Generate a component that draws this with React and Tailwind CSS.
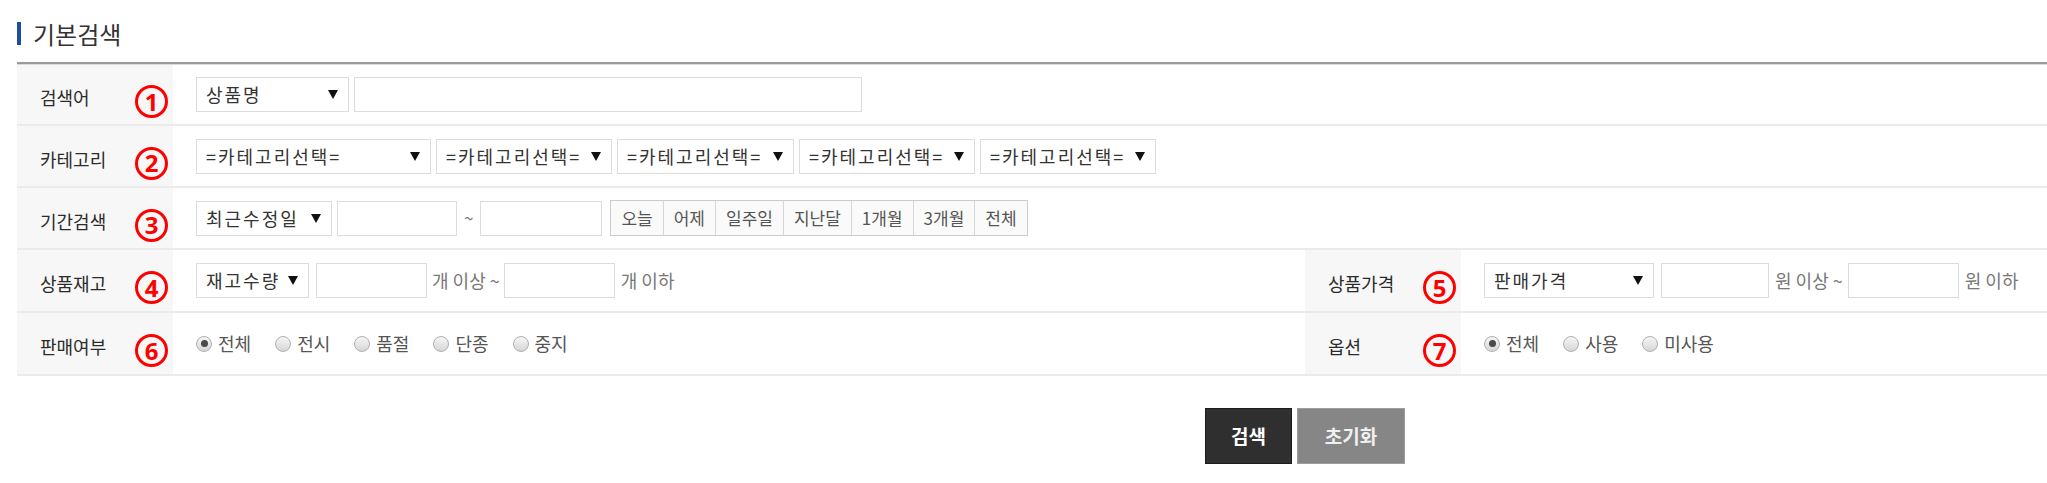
import React from "react";

function Num({ n }) {
  return (
    <span className="mt-[14px] flex h-[33px] w-[33px] shrink-0 items-center justify-center rounded-full border-[3px] border-[#ff0000] font-['Noto_Sans',sans-serif] text-[24px] font-bold leading-none text-[#ff0000]">
      {n}
    </span>
  );
}

function Label({ text, n }) {
  return (
    <div className="flex h-full items-center bg-[#f7f7f7] pl-[23px]">
      <span className="mt-[6px] w-[95px] shrink-0 text-[18px] text-[#2b2b2b]">{text}</span>
      <Num n={n} />
    </div>
  );
}

function Arrow() {
  return (
    <svg width="10" height="9" viewBox="0 0 10 9" className="shrink-0">
      <path d="M0 0 L10 0 L5 9 Z" fill="#111" />
    </svg>
  );
}

function Select({ text, w }) {
  return (
    <div className={`flex h-[35px] shrink-0 items-center justify-between border border-[#dcdcdc] bg-white pl-[9px] pr-[10px] ${w}`}>
      <span className="whitespace-nowrap text-[18px] tracking-[2px] text-[#333]">{text}</span>
      <Arrow />
    </div>
  );
}

function Input({ w }) {
  return <div className={`h-[35px] shrink-0 border border-[#dcdcdc] bg-white ${w}`} />;
}

function Radio({ checked, label }) {
  return (
    <div className="flex items-center gap-[6px]">
      <span className="flex h-[16px] w-[16px] items-center justify-center rounded-full border border-[#b0b0b0] bg-[linear-gradient(#f6f6f6,#d6d6d6)]">
        {checked && <span className="h-[7px] w-[7px] rounded-full bg-[#4a4a4a]" />}
      </span>
      <span className="text-[18px] text-[#555]">{label}</span>
    </div>
  );
}

const periods = ["오늘", "어제", "일주일", "지난달", "1개월", "3개월", "전체"];

export default function App() {
  return (
    <div className="min-h-screen bg-white pl-[17px] font-['Noto_Sans_CJK_KR','Noto_Sans',sans-serif]">
      {/* title */}
      <div className="flex items-center gap-[12px] pt-[22px]">
        <span className="h-[23px] w-[4px] bg-[#1b4f9c]" />
        <h2 className="text-[24px] leading-[23px] text-[#333]">기본검색</h2>
      </div>

      <div className="mt-[17px] h-[2px] bg-[#9b9b9b]" />
      <div className="h-[1px] bg-[#dcdcdc]" />

      {/* 검색어 */}
      <div className="flex h-[61px] border-b-2 border-[#ebebeb]">
        <div className="w-[156px] shrink-0">
          <Label text="검색어" n="1" />
        </div>
        <div className="flex items-center gap-[5px] pl-[23px]">
          <Select text="상품명" w="w-[153px]" />
          <Input w="w-[508px]" />
        </div>
      </div>

      {/* 카테고리 */}
      <div className="flex h-[62px] border-b-2 border-[#ebebeb]">
        <div className="w-[156px] shrink-0">
          <Label text="카테고리" n="2" />
        </div>
        <div className="flex items-center gap-[5px] pl-[23px]">
          <Select text="=카테고리선택=" w="w-[235px]" />
          <Select text="=카테고리선택=" w="w-[176px]" />
          <Select text="=카테고리선택=" w="w-[177px]" />
          <Select text="=카테고리선택=" w="w-[176px]" />
          <Select text="=카테고리선택=" w="w-[176px]" />
        </div>
      </div>

      {/* 기간검색 */}
      <div className="flex h-[62px] border-b-2 border-[#ebebeb]">
        <div className="w-[156px] shrink-0">
          <Label text="기간검색" n="3" />
        </div>
        <div className="flex items-center pl-[23px]">
          <Select text="최근수정일" w="w-[136px]" />
          <div className="ml-[5px]">
            <Input w="w-[120px]" />
          </div>
          <span className="mx-[7px] text-[17px] text-[#777]">~</span>
          <Input w="w-[122px]" />
          <div className="ml-[8px] flex h-[36px] border border-[#cccccc] bg-[#fafafa]">
            {periods.map((p, i) => (
              <span
                key={p}
                className={`flex items-center px-[10px] text-[17px] text-[#555] ${i > 0 ? "border-l border-[#d6d6d6]" : ""}`}
              >
                {p}
              </span>
            ))}
          </div>
        </div>
      </div>

      {/* 상품재고 / 상품가격 */}
      <div className="grid h-[63px] grid-cols-[156px_1132px_156px_1fr] border-b-2 border-[#ebebeb]">
        <Label text="상품재고" n="4" />
        <div className="flex items-center pl-[23px]">
          <Select text="재고수량" w="w-[113px]" />
          <div className="ml-[7px]">
            <Input w="w-[111px]" />
          </div>
          <span className="ml-[5px] mr-[4px] text-[18px] text-[#777]">개 이상 ~</span>
          <Input w="w-[111px]" />
          <span className="ml-[6px] text-[18px] text-[#777]">개 이하</span>
        </div>
        <Label text="상품가격" n="5" />
        <div className="flex items-center pl-[23px]">
          <Select text="판매가격" w="w-[170px]" />
          <div className="ml-[7px]">
            <Input w="w-[108px]" />
          </div>
          <span className="ml-[6px] mr-[5px] text-[18px] text-[#777]">원 이상 ~</span>
          <Input w="w-[111px]" />
          <span className="ml-[6px] text-[18px] text-[#777]">원 이하</span>
        </div>
      </div>

      {/* 판매여부 / 옵션 */}
      <div className="grid h-[63px] grid-cols-[156px_1132px_156px_1fr] border-b-2 border-[#ebebeb]">
        <Label text="판매여부" n="6" />
        <div className="flex items-center gap-[24px] pl-[23px]">
          <Radio checked label="전체" />
          <Radio label="전시" />
          <Radio label="품절" />
          <Radio label="단종" />
          <Radio label="중지" />
        </div>
        <Label text="옵션" n="7" />
        <div className="flex items-center gap-[24px] pl-[23px]">
          <Radio checked label="전체" />
          <Radio label="사용" />
          <Radio label="미사용" />
        </div>
      </div>

      {/* buttons */}
      <div className="ml-[1188px] mt-[32px] flex gap-[5px]">
        <button className="flex h-[56px] w-[87px] items-center justify-center border border-[#1c1c1c] bg-[#2f2f2f] text-[19px] font-bold text-white">
          검색
        </button>
        <button className="flex h-[56px] w-[108px] items-center justify-center border border-[#9c9c9c] bg-[#868686] text-[19px] font-bold text-[#f0f0f0]">
          초기화
        </button>
      </div>
    </div>
  );
}
